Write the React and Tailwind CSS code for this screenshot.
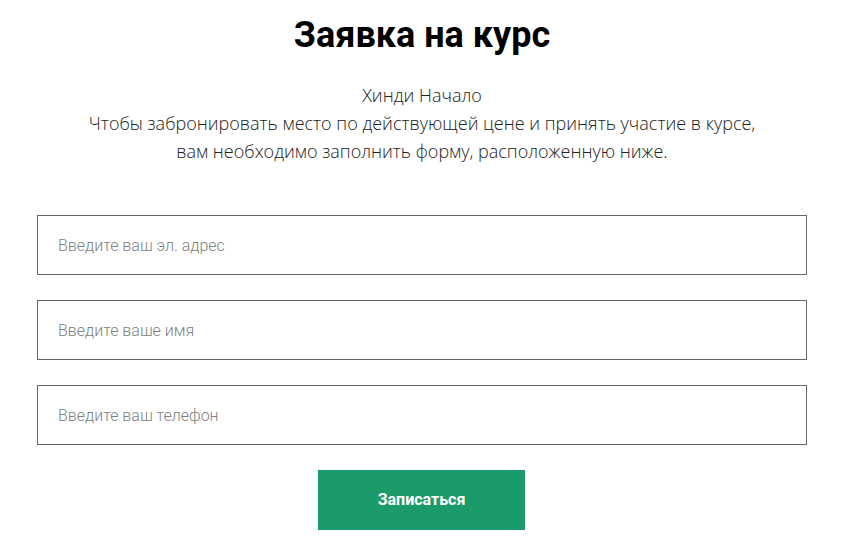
import React from "react";

const fields = [
  { type: "email", placeholder: "Введите ваш эл. адрес" },
  { type: "text", placeholder: "Введите ваше имя" },
  { type: "tel", placeholder: "Введите ваш телефон" },
];

export default function App() {
  return (
    <div className="min-h-screen bg-white">
      <div className="ml-[37px] w-[770px] pt-[13px] flex flex-col items-center">
        <h1 className="font-['Roboto',sans-serif] font-bold text-[36px] leading-[44px] text-black">
          Заявка на курс
        </h1>
        <div className="mt-[24px] text-center font-['Open_Sans',sans-serif] font-light text-[18px] leading-[28px] text-[#222]">
          <p>Хинди Начало</p>
          <p>Чтобы забронировать место по действующей цене и принять участие в курсе,</p>
          <p>вам необходимо заполнить форму, расположенную ниже.</p>
        </div>

        <form className="mt-[50px] w-full flex flex-col gap-[25px]" onSubmit={(e) => e.preventDefault()}>
          {fields.map((f) => (
            <input
              key={f.placeholder}
              type={f.type}
              placeholder={f.placeholder}
              className="h-[60px] w-full border border-[#666] px-[20px] font-['Roboto',sans-serif] font-light text-[16px] text-[#333] placeholder:text-[#808080] outline-none"
            />
          ))}
          <div className="flex justify-center pr-[1px]">
            <button
              type="submit"
              className="h-[60px] w-[207px] bg-[#1b9b69] text-white font-['Roboto',sans-serif] font-bold text-[16px]"
            >
              Записаться
            </button>
          </div>
        </form>
      </div>
    </div>
  );
}
